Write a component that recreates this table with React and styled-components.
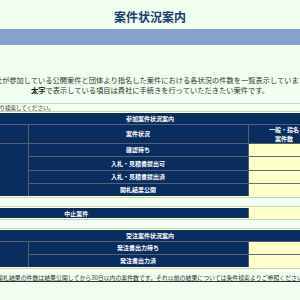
import React from 'react';
import styled, { createGlobalStyle } from 'styled-components';

const Global = createGlobalStyle`
  html, body { margin: 0; padding: 0; background: #f0fff0; overflow: hidden; }
  #root { width: 300px; }
`;

const Page = styled.div`
  width: 300px;
  display: flex;
  flex-direction: column;
  align-items: center;
  font-family: "Noto Sans CJK JP", sans-serif;
  color: #333;
`;

const Title = styled.h1`
  margin: 0;
  padding-top: 10px;
  font-size: 12px;
  line-height: 14px;
  font-weight: bold;
  color: #1e3c70;
`;

const Bar = styled.div`
  align-self: stretch;
  height: 16px;
  margin-top: 5px;
  background: #88a0cc;
`;

const Intro = styled.p`
  width: 490px;
  margin: 30px 0 0;
  text-align: center;
  font-size: 7.25px;
  line-height: 10px;
  white-space: nowrap;
  color: #333;
  b { font-weight: bold; color: #111; }
`;

const Hint = styled.div`
  width: 490px;
  box-sizing: border-box;
  margin-top: 8px;
  padding: 0 1px;
  height: 8px;
  border-top: 1px solid #c9d0c9;
  font-size: 5.5px;
  line-height: 8px;
  white-space: nowrap;
  color: #333;
`;

const Block = styled.div`
  width: 490px;
  box-sizing: border-box;
  margin-top: ${(p) => p.$gap}px;
  padding: 1px 0;
  border-top: 1px solid #d6cea0;
  border-bottom: 1px solid #d6cea0;
`;

const Grid = styled.table`
  width: 100%;
  border-collapse: collapse;
  border-style: hidden;
  table-layout: fixed;
  font-size: 6px;
  color: #fff;
`;

const Col = styled.col`
  width: ${(p) => p.$w}px;
`;

const Row = styled.tr`
  height: ${(p) => p.$h}px;
`;

const Head = styled.th`
  background: #0a2d5f;
  border: 1px solid #56606e;
  padding: 0;
  text-align: center;
  vertical-align: middle;
  line-height: ${(p) => p.$lh || 7}px;
  font-weight: bold;
  white-space: nowrap;
`;

const Count = styled.td`
  background: #ffffcc;
  border: 1px solid #6a6c70;
  padding: 0;
  text-align: center;
  color: #333;
`;

const Footnote = styled.p`
  width: 490px;
  margin: 4px 0 0;
  text-align: center;
  font-size: 5.9px;
  line-height: 10px;
  white-space: nowrap;
  color: #333;
  text-decoration: underline;
`;

const Cols = () => (
  <colgroup>
    <Col $w={123} />
    <Col $w={220} />
    <Col $w={72} />
    <Col $w={75} />
  </colgroup>
);

const joinRows = ['確認待ち', '入札・見積書提出可', '入札・見積書提出済', '開札結果公開'];
const orderRows = ['発注書出力待ち', '発注書出力済'];

export default function App() {
  return (
    <>
      <Global />
      <Page>
        <Title>案件状況案内</Title>
        <Bar />
        <Intro>
          貴社が参加している公開案件と団体より指名した案件における各状況の件数を一覧表示しています。
          <br />
          <b>太字</b>で表示している項目は貴社に手続きを行っていただきたい案件です。
        </Intro>
        <Hint>他の案件を確認する場合は条件検索より検索してください。</Hint>

        <Block $gap={0}>
          <Grid>
            <Cols />
            <tbody>
              <Row $h={11}>
                <Head colSpan={4}>参加案件状況案内</Head>
              </Row>
              <Row $h={19}>
                <Head>区分</Head>
                <Head>案件状況</Head>
                <Head $lh={9}>
                  一般・指名
                  <br />
                  案件数
                </Head>
                <Head $lh={9}>
                  随意契約
                  <br />
                  案件数
                </Head>
              </Row>
              {joinRows.map((label, i) => (
                <Row key={label} $h={i === 1 ? 14 : 13}>
                  {i === 0 && <Head rowSpan={4}>参加案件</Head>}
                  <Head>{label}</Head>
                  <Count />
                  <Count />
                </Row>
              ))}
            </tbody>
          </Grid>
        </Block>

        <Block $gap={8}>
          <Grid>
            <Cols />
            <tbody>
              <Row $h={10}>
                <Head colSpan={2}>中止案件</Head>
                <Count />
                <Count />
              </Row>
            </tbody>
          </Grid>
        </Block>

        <Block $gap={8}>
          <Grid>
            <Cols />
            <tbody>
              <Row $h={11}>
                <Head colSpan={4}>受注案件状況案内</Head>
              </Row>
              {orderRows.map((label, i) => (
                <Row key={label} $h={13}>
                  {i === 0 && <Head rowSpan={2}>受注案件</Head>}
                  <Head>{label}</Head>
                  <Count />
                  <Count />
                </Row>
              ))}
            </tbody>
          </Grid>
        </Block>

        <Footnote>
          ※開札結果の件数は結果公開してから30日以内の案件数です。それ以前の結果については条件検索よりご参照ください。
        </Footnote>
      </Page>
    </>
  );
}
